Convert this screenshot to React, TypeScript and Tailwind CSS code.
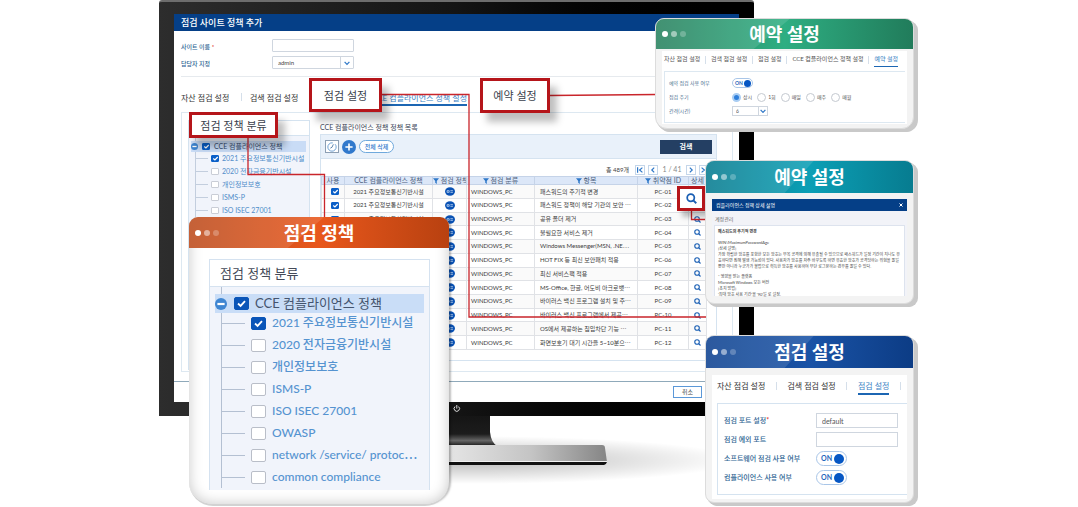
import React from 'react';

const TREE = [
  '2021 주요정보통신기반시설',
  '2020 전자금융기반시설',
  '개인정보보호',
  'ISMS-P',
  'ISO ISEC 27001',
  'OWASP',
  'network /service/ protoc⋯',
  'common compliance',
];

const ITEMS = [
  '패스워드의 주기적 변경',
  '패스워드 정책이 해당 기관의 보안 ⋯',
  '공유 폴더 제거',
  '불필요한 서비스 제거',
  'Windows Messenger(MSN, .NE⋯',
  'HOT FIX 등 최신 보안패치 적용',
  '최신 서비스팩 적용',
  'MS-Office, 한글, 어도비 아크로뱃⋯',
  '바이러스 백신 프로그램 설치 및 주⋯',
  '바이러스 백신 프로그램에서 제공⋯',
  'OS에서 제공하는 침입차단 기능 ⋯',
  '화면보호기 대기 시간을 5~10분으⋯',
];

function Check({ label, checked, big }: { label: string; checked?: boolean; big?: boolean }) {
  return (
    <span className="grid shrink-0 place-items-center">
      <input
        type="checkbox"
        aria-label={label}
        defaultChecked={checked}
        className={
          big
            ? 'peer h-[13px] w-[15px] appearance-none rounded-[2px] border border-[#b9bec8] bg-white [grid-area:1/1] checked:border-[#0a55b8] checked:bg-[#0a55b8]'
            : 'peer h-[7px] w-[8px] appearance-none rounded-[1px] border border-[#c9cdd6] bg-white [grid-area:1/1] checked:border-[#0a5fc8] checked:bg-[#0a5fc8]'
        }
      />
      <svg
        viewBox="0 0 12 12"
        className={
          big
            ? 'pointer-events-none invisible size-[11px] [grid-area:1/1] peer-checked:visible'
            : 'pointer-events-none invisible size-[7px] [grid-area:1/1] peer-checked:visible'
        }
      >
        <path d="M2.2 6 L5 8.6 L9.8 3.4" fill="none" stroke="#fff" strokeWidth="2" />
      </svg>
    </span>
  );
}

function Minus({ className }: { className: string }) {
  return (
    <svg viewBox="0 0 12 12" className={className}>
      <circle cx="6" cy="6" r="6" fill="#3f86d2" />
      <rect x="2.4" y="4.9" width="7.2" height="2.2" fill="#fff" />
    </svg>
  );
}

function SmallTree() {
  return (
    <div className="relative flex flex-col pt-[5px]">
      <div className="absolute top-0 bottom-0 left-[6px] w-px bg-[#c3cede]" />
      <div className="relative ml-[2px] mr-[3px] flex h-[11px] items-center bg-[#c9dcf6]">
        <Minus className="size-[7px]" />
        <span className="ml-[4px] flex items-center gap-[4px]">
          <Check label="CCE 컴플라이언스 정책" checked />
          <span className="text-[7px] text-[#33496b]">CCE 컴플라이언스 정책</span>
        </span>
      </div>
      {TREE.slice(0, 5).map((t, i) => (
        <div key={t} className="ml-[6px] flex h-[13px] items-center">
          <span className="h-px w-[13px] bg-[#c3cede]" />
          <span className="ml-[3px] flex items-center gap-[3px]">
            <Check label={t} checked={i === 0} />
            <span className="text-[7px] text-[#4f8cc9]">{t}</span>
          </span>
        </div>
      ))}
    </div>
  );
}

function BigTree() {
  return (
    <div className="relative flex flex-col pt-[7px]">
      <div className="absolute top-0 bottom-0 left-[11px] w-px bg-[#b4c0d2]" />
      <div className="relative mr-[5px] ml-[5px] flex h-[19px] items-center bg-[#c9ddf7]">
        <Minus className="size-[12px]" />
        <span className="ml-[7px] flex items-center gap-[6px]">
          <Check big label="CCE 컴플라이언스 정책" checked />
          <span className="text-[13px] text-[#44546e]">CCE 컴플라이언스 정책</span>
        </span>
      </div>
      <div className="-mt-px flex flex-col">
        {TREE.map((t, i) => (
          <div key={t} className="ml-[11px] flex h-[22px] items-center">
            <span className="h-px w-[24px] bg-[#b4c0d2]" />
            <span className="ml-[6px] flex items-center gap-[6px]">
              <Check big label={t} checked={i === 0} />
              <span className="text-[12px] font-medium text-[#5593d0]">{t}</span>
            </span>
          </div>
        ))}
      </div>
    </div>
  );
}

function Filter() {
  return (
    <svg viewBox="0 0 10 10" className="inline-block size-[6px] align-middle">
      <path d="M0 0.5 H10 L6.3 5 V10 L3.7 8 V5 Z" fill="#2f78c8" />
    </svg>
  );
}

function Mag({ className }: { className: string }) {
  return (
    <svg viewBox="0 0 12 12" className={className}>
      <circle cx="5.2" cy="5.2" r="3.9" fill="none" stroke="#1a5fb4" strokeWidth="1.9" />
      <path d="M8 8 L11.2 11.2" stroke="#1a5fb4" strokeWidth="2.1" />
    </svg>
  );
}

function Chevron({ d }: { d: string }) {
  return (
    <svg viewBox="0 0 10 10" className="size-[8px]">
      <path d={d} fill="none" stroke="#2f78c8" strokeWidth="1.5" />
    </svg>
  );
}

function Select({ label, value, small }: { label: string; value: string; small?: boolean }) {
  return (
    <div
      className={
        small
          ? 'grid h-[10px] w-[36px] grid-cols-[1fr_9px] border border-[#cfd6df] bg-white'
          : 'grid h-[13px] w-[82px] grid-cols-[1fr_13px] rounded-[1px] border border-[#cfd6df] bg-white'
      }
    >
      <select
        aria-label={label}
        className={
          small
            ? 'col-span-2 col-start-1 row-start-1 appearance-none pl-[3px] text-[5px] text-[#555]'
            : 'col-span-2 col-start-1 row-start-1 appearance-none pl-[5px] text-[6px] text-[#555]'
        }
      >
        <option>{value}</option>
      </select>
      <span className="pointer-events-none col-start-2 row-start-1 flex items-center justify-center border-l border-[#cfd6df]">
        <Chevron d="M2 3.5 L5 6.8 L8 3.5" />
      </span>
    </div>
  );
}

function Toggle({ label, small }: { label: string; small?: boolean }) {
  return (
    <button
      type="button"
      role="switch"
      aria-checked="true"
      aria-label={label}
      className={
        small
          ? 'flex h-[10px] w-[21px] items-center justify-between rounded-full border border-[#a9c6e8] bg-white pr-px pl-[2px] text-[5px] font-bold text-[#1f66bb]'
          : 'flex h-[15px] w-[31px] items-center justify-between rounded-full border border-[#a9c6e8] bg-white pr-[2px] pl-[4px] text-[7px] font-bold text-[#1f66bb]'
      }
    >
      ON
      <span className={small ? 'size-[7px] rounded-full bg-[#0657c4]' : 'size-[10px] rounded-full bg-[#0657c4]'} />
    </button>
  );
}

function Callout({ text, className }: { text: string; className: string }) {
  return (
    <div
      className={`absolute flex items-center justify-center border-[3px] border-[#b5151a] bg-white text-[11px] text-[#3a3f4c] shadow-[7px_9px_7px_rgba(0,0,0,0.25)] ${className}`}
    >
      {text}
    </div>
  );
}

function Card({
  title,
  className,
  head,
  children,
}: {
  title: string;
  className: string;
  head: string;
  children: React.ReactNode;
}) {
  return (
    <section className={`absolute flex flex-col overflow-clip ${className}`}>
      <header className={`relative flex shrink-0 items-center justify-center ${head}`}>
        <svg viewBox="0 0 100 30" preserveAspectRatio="none" className="absolute inset-0 size-full">
          <path d="M0 0 H52 L38 30 H0 Z" fill="#fff" fillOpacity="0.12" />
        </svg>
        <span className="absolute left-[6px] flex gap-[3px]">
          <i className="size-[6px] rounded-full bg-white" />
          <i className="size-[6px] rounded-full bg-white/50" />
          <i className="size-[6px] rounded-full bg-white/25" />
        </span>
        <h2 className="relative text-[18px] font-bold text-white">{title}</h2>
      </header>
      {children}
    </section>
  );
}

const Sep = () => <span className="h-[8px] w-px bg-[#d5dfea]" />;

function Monitor() {
  return (
    <div className="ml-[159px] w-[595px]">
      <div className="rounded-t-[3px] border-t-2 border-[#6d6d6d] bg-linear-to-r from-[#2d2d2d] via-[#141414] to-black px-[15px] pt-[12px] pb-[14px]">
        <div className="flex h-[388px] flex-col bg-white">
          <h1 className="flex h-[17px] shrink-0 items-center bg-[#053f87] pl-[7px] text-[9px] font-medium text-white">
            점검 사이트 정책 추가
          </h1>
          <div className="mx-[7px] flex flex-col gap-[4px] border-b border-[#e6eaee] pt-[8px] pb-[7px] text-[6px] font-medium text-[#2f6593]">
            <div className="flex items-center">
              <label htmlFor="site" className="w-[91px] pt-[2px]">
                사이트 이름 <span className="text-[#d22]">*</span>
              </label>
              <input id="site" className="h-[13px] w-[82px] rounded-[1px] border border-[#cfd6df] bg-white" />
            </div>
            <div className="flex items-center">
              <span className="w-[91px] pt-[2px]">담당자 지정</span>
              <Select label="담당자 지정" value="admin" />
            </div>
          </div>
          <nav className="mt-[16px] ml-[7px] flex h-[13px] items-start text-[8px] text-[#333]">
            <a href="#asset" className="w-[60px] pt-px">자산 점검 설정</a>
            <Sep />
            <a href="#search" className="ml-[8px] w-[68px] pt-px">검색 점검 설정</a>
            <a href="#check" className="w-[51px]" aria-label="점검 설정" />
            <a href="#cce" className="flex h-[13px] w-[98px] justify-end border-b-2 border-[#1c66b3] pt-px text-[#3b82c4]">
              CCE 컴플라이언스 정책 설정
            </a>
            <span className="ml-[10px]"><Sep /></span>
          </nav>
          <div className="mt-[6px] mr-[6px] ml-[7px] flex h-[260px] border border-[#dde8f1] pt-[7px]">
            <aside className="ml-[6px] h-[250px] w-[122px] shrink-0 border border-[#d5e3f0] bg-[#f1f4fb]">
              <div className="h-[15px] border-b border-[#d5e3f0] bg-white" />
              <SmallTree />
            </aside>
            <div className="ml-[10px] w-[397px]">
              <h2 className="flex h-[14px] items-center text-[7px] text-[#3c4658]">CCE 컴플라이언스 정책 정책 목록</h2>
              <div className="h-[227px] border border-[#d5e3f0]">
                <div className="flex h-[24px] items-center border-b border-[#d5e3f0] bg-[#e9f1fa] pr-[4px] pl-[4px]">
                  <button type="button" aria-label="기록" className="flex h-[13px] w-[14px] items-center justify-center border border-[#8d9fb3] bg-white">
                    <svg viewBox="0 0 12 12" className="size-[10px]">
                      <circle cx="6" cy="6" r="5" fill="none" stroke="#5591cd" strokeWidth="1" strokeDasharray="24 3" />
                      <path d="M7.6 2.8 L6 6.3 L4 7.4" fill="none" stroke="#3e6c9c" strokeWidth="1" />
                    </svg>
                  </button>
                  <button type="button" aria-label="추가" className="ml-[3px]">
                    <svg viewBox="0 0 14 14" className="size-[14px]">
                      <circle cx="7" cy="7" r="7" fill="#3179cc" />
                      <path d="M7 3.4 V10.6 M3.4 7 H10.6" stroke="#fff" strokeWidth="1.6" />
                    </svg>
                  </button>
                  <button type="button" className="ml-[3px] h-[13px] w-[35px] rounded-full border border-[#6fa9dc] bg-white text-[6px] font-medium leading-none text-[#3179cc]">
                    전체 삭제
                  </button>
                  <button type="button" className="ml-auto h-[14px] w-[52px] bg-[#243f63] text-[7px] font-bold leading-none text-white">
                    검색
                  </button>
                </div>
                <div className="flex h-[17px] items-center gap-[3px] pt-[4px] pl-[285px] text-[7px] text-[#444]">
                  <span className="w-[26px] whitespace-nowrap text-[6px]">총 489개</span>
                  <button type="button" aria-label="처음" className="flex size-[10px] items-center justify-center border border-[#c4d6ea]">
                    <Chevron d="M2 1.5 V8.5 M8 2 L4.5 5 L8 8" />
                  </button>
                  <button type="button" aria-label="이전" className="flex size-[10px] items-center justify-center border border-[#c4d6ea]">
                    <Chevron d="M6.5 2 L3.5 5 L6.5 8" />
                  </button>
                  <span className="flex w-[22px] justify-center whitespace-nowrap text-[#888]">1 / 41</span>
                  <button type="button" aria-label="다음" className="flex size-[10px] items-center justify-center border border-[#c4d6ea]">
                    <Chevron d="M3.5 2 L6.5 5 L3.5 8" />
                  </button>
                  <button type="button" aria-label="마지막" className="flex size-[10px] items-center justify-center border border-[#c4d6ea]">
                    <Chevron d="M2 2 L5.5 5 L2 8 M8 1.5 V8.5" />
                  </button>
                </div>
                <table className="h-[174px] w-[385px] table-fixed border-collapse text-[6px] leading-none whitespace-nowrap text-[#3a3a3a]">
                  <colgroup>
                    <col className="w-[23px]" />
                    <col className="w-[88px]" />
                    <col className="w-[34px]" />
                    <col className="w-[68px]" />
                    <col className="w-[103px]" />
                    <col className="w-[51px]" />
                    <col className="w-[18px]" />
                  </colgroup>
                  <thead>
                    <tr className="bg-[#dce7f8] text-[#4c5f7d] [&>th]:overflow-hidden [&>th]:border [&>th]:border-[#c5d3e8] [&>th]:p-0 [&>th]:text-[7px] [&>th]:font-normal">
                      <th>사용</th>
                      <th>CCE 컴플라이언스 정책</th>
                      <th><Filter /> 점검 정책</th>
                      <th><Filter /> 점검 분류</th>
                      <th><Filter /> 항목</th>
                      <th><Filter /> 취약점 ID</th>
                      <th>상세</th>
                    </tr>
                  </thead>
                  <tbody>
                    {ITEMS.map((item, i) => (
                      <tr key={item} className="odd:bg-[#fafafa] [&>td]:border [&>td]:border-[#e0e2e6] [&>td]:p-0">
                        <td>
                          <span className="flex justify-center pl-[4px]">
                            <Check label={`${item} 사용`} checked />
                          </span>
                        </td>
                        <td className="text-center">2021 주요정보통신기반시설</td>
                        <td>
                          <svg viewBox="0 0 12 10" className="mx-auto h-[9px] w-[10px]">
                            <ellipse cx="6" cy="5" rx="6" ry="5" fill="#0a52b4" />
                            <path d="M2.5 4 H5 V6 H2.5 Z M6.5 4 H9.5 M6.5 6 H9.5" fill="none" stroke="#cfe0f5" strokeWidth="0.9" />
                          </svg>
                        </td>
                        <td><span className="pl-[4px]">WINDOWS_PC</span></td>
                        <td><span className="pl-[5px]">{item}</span></td>
                        <td className="text-center">PC-{String(i + 1).padStart(2, '0')}</td>
                        <td><Mag className="mx-auto size-[7px]" /></td>
                      </tr>
                    ))}
                  </tbody>
                </table>
              </div>
            </div>
          </div>
          <div className="mt-[9px] flex flex-1 items-center justify-end border-t border-[#8fa9ba] pr-[37px]">
            <button type="button" className="h-[12px] w-[29px] border border-[#5b98d8] bg-white text-[6px] leading-none text-[#444]">
              취소
            </button>
          </div>
        </div>
      </div>
      <svg viewBox="0 0 595 91" className="block w-full">
        <defs>
          <linearGradient id="neck" x1="0" y1="0" x2="0" y2="1">
            <stop offset="0" stopColor="#151515" />
            <stop offset="0.6" stopColor="#1c1c1c" />
            <stop offset="0.82" stopColor="#666" />
            <stop offset="1" stopColor="#181818" />
          </linearGradient>
          <linearGradient id="base" x1="0" y1="0" x2="1" y2="0">
            <stop offset="0" stopColor="#aaa" />
            <stop offset="0.5" stopColor="#e2e2e2" />
            <stop offset="0.75" stopColor="#c4c4c4" />
            <stop offset="1" stopColor="#858585" />
          </linearGradient>
          <radialGradient id="floor">
            <stop offset="0" stopColor="#000" stopOpacity="0.28" />
            <stop offset="1" stopColor="#000" stopOpacity="0" />
          </radialGradient>
        </defs>
        <ellipse cx="310" cy="44" rx="270" ry="24" fill="url(#floor)" />
        <path d="M266 0 H331 V16 Q332 26 338 30 H258 Q266 26 266 16 Z" fill="url(#neck)" />
        <path d="M150 29 H443 Q446 29 446 32 L448 46 H146 Z" fill="url(#base)" />
        <path d="M146 45.5 H448" stroke="#f2f2f2" strokeWidth="1" />
        <path d="M146 46 H448 Q447 49 445 49 H149 Z" fill="#111" />
      </svg>
    </div>
  );
}

export default function App() {
  return (
    <main className="overflow-x-auto bg-white font-['Lato','Noto_Sans_CJK_KR',sans-serif]">
      <div className="relative mx-auto min-h-[507px] w-full max-w-[1078px] overflow-hidden leading-none">
        <Monitor />

        <svg width="1078" height="507" viewBox="0 0 1078 507" className="absolute top-0 left-0">
          <g fill="none" stroke="#c9252b" strokeWidth="1.3">
            <path d="M382 94.5 H469 V317 H706" />
            <path d="M549 95.5 L657 94.5" />
            <path d="M248 137 V174.5 H324.5 V217" />
            <path d="M691.5 211 V219.5 H708" />
          </g>
          <path d="M455 406.6 A2.7 2.7 0 1 0 458.6 406.6 M456.8 405 V408.6" fill="none" stroke="#ddd" strokeWidth="1" />
        </svg>

        <Callout text="점검 설정" className="top-[78px] left-[309px] h-[34px] w-[73px]" />
        <Callout text="예약 설정" className="top-[78px] left-[480px] h-[35px] w-[70px]" />
        <Callout text="점검 정책 분류" className="top-[112px] left-[189px] h-[26px] w-[89px]" />
        <div className="absolute top-[186px] left-[677px] flex h-[25px] w-[28px] items-center justify-center border-[3px] border-[#b5151a] bg-white shadow-[5px_6px_5px_rgba(0,0,0,0.25)]">
          <Mag className="size-[11px]" />
        </div>

        <Card
          title="점검 정책"
          className="top-[217px] left-[189px] h-[289px] w-[260px] rounded-t-[9px] rounded-b-[24px] border-b-2 border-[#d2d2d2] bg-white shadow-[4px_0_2px_-2px_rgba(0,0,0,0.25),inset_0_0_14px_rgba(0,0,0,0.22)]"
          head="h-[31px] bg-linear-to-r from-[#bd4c1d] via-[#e8571c] to-[#b84110]"
        >
          <div className="mt-[11px] mr-[19px] ml-[20px] flex h-[231px] flex-col border border-b-0 border-[#d5e2f0] bg-[#f1f4fb]">
            <h3 className="flex h-[27px] items-center border-b border-[#d5e2f0] bg-white pl-[10px] text-[13px] text-[#444a58]">
              점검 정책 분류
            </h3>
            <BigTree />
          </div>
        </Card>

        <Card
          title="예약 설정"
          className="top-[18px] left-[655px] h-[111px] w-[259px] rounded-t-[9px] rounded-b-[12px] border border-[#dcdcdc] bg-[#f3f3f3] shadow-[1px_1px_0_#c9c9c9,2px_2px_0_#c9c9c9,3px_3px_0_#c9c9c9,4px_3px_0_#c9c9c9]"
          head="h-[30px] bg-linear-to-r from-[#28825f] via-[#2eae82] to-[#217c5b]"
        >
          <div className="mx-[6px] mt-[2px] flex h-[73px] flex-col bg-white px-[2px] pt-[5px]">
            <nav className="flex h-[12px] items-start justify-between pr-[7px] text-[6px] text-[#555]">
              <a href="#c1">자산 점검 설정</a>
              <Sep />
              <a href="#c2">검색 점검 설정</a>
              <Sep />
              <a href="#c3">점검 설정</a>
              <Sep />
              <a href="#c4">CCE 컴플라이언스 정책 설정</a>
              <Sep />
              <a href="#c5" className="h-[11px] border-b border-[#1c66b3] text-[#3b82c4]">예약 설정</a>
            </nav>
            <div className="mt-[3px] flex h-[52px] flex-col justify-center gap-[3px] border border-r-0 border-[#dde8f1] pl-[4px] text-[5px] text-[#4d7090]">
              <div className="flex h-[11px] items-center">
                <span className="w-[63px]">예약 점검 사용 여부</span>
                <Toggle small label="예약 점검 사용 여부" />
              </div>
              <div className="flex h-[11px] items-center">
                <span className="w-[63px]">점검 주기</span>
                <span className="flex gap-[5px] text-[#555]">
                  {['상시', '1회', '매일', '매주', '매월'].map((t, i) => (
                    <label key={t} className="flex items-center gap-[2px] whitespace-nowrap">
                      <input
                        type="radio"
                        name="cycle"
                        defaultChecked={i === 0}
                        className="size-[9px] appearance-none rounded-full border border-[#c4c9d0] bg-white checked:border-2 checked:border-[#a9cdf3] checked:bg-[#2f7fdb]"
                      />
                      {t}
                    </label>
                  ))}
                </span>
              </div>
              <div className="flex h-[11px] items-center">
                <span className="w-[63px]">간격(시간)</span>
                <Select small label="간격(시간)" value="6" />
              </div>
            </div>
          </div>
        </Card>

        <Card
          title="예약 설정"
          className="top-[160px] left-[705px] h-[144px] w-[209px] rounded-[9px] border border-[#dcdcdc] bg-[#f3f3f3] shadow-[1px_1px_0_#c9c9c9,2px_2px_0_#c9c9c9,3px_3px_0_#c9c9c9,4px_3px_0_#c9c9c9]"
          head="h-[32px] bg-linear-to-r from-[#077c90] via-[#0c9fb5] to-[#077c90]"
        >
          <div className="mx-[6px] mt-[6px] flex flex-col bg-[#f2f3f8]">
            <h3 className="flex h-[12px] items-center justify-between bg-[#053f87] px-[4px] text-[5px] text-white">
              컴플라이언스 정책 상세 설명
              <svg viewBox="0 0 8 8" className="size-[4px]">
                <path d="M1 1 L7 7 M7 1 L1 7" stroke="#fff" strokeWidth="2" />
              </svg>
            </h3>
            <p className="mt-[6px] mb-[3px] ml-[3px] text-[5px] text-[#666]">계정관리</p>
            <div className="mr-[2px] ml-[2px] h-[71px] border border-b-0 border-[#dde3ee] bg-white pt-[3px] pr-px pl-[3px] text-[4px] leading-[6px] text-[#444]">
              <p className="mb-[5px] font-bold">패스워드의 주기적 변경</p>
              <p>WIN\MaximumPasswordAge</p>
              <p>[상세 설명]</p>
              <p className="mb-[4px] break-all">
                가장 확립한 암호를 포함한 모든 암호는 무복 공격에 의해 유출될 수 있으므로 패스워드가 일정 기간이 지나도 유효하다면 침해 발생 가능성이 있다.
                사용자가 암호를 자주 바꾸도록 하면 유효한 암호가 공격당하는 위험을 줄일 뿐만 아니라 누군가가 불법으로 획득한 암호를 사용하여 무단
                로그온하는 경우를 줄일 수 있다.
              </p>
              <p>* 영향을 받는 플랫폼</p>
              <p>Microsoft Windows 모든 버전</p>
              <p>[조치 방법]</p>
              <p>'최대 암호 사용 기간'을 '90'일 로 설정.</p>
            </div>
          </div>
        </Card>

        <Card
          title="점검 설정"
          className="top-[335px] left-[705px] h-[168px] w-[209px] rounded-[9px] border border-[#dcdcdc] bg-[#f3f3f3] shadow-[1px_1px_0_#c9c9c9,2px_2px_0_#c9c9c9,3px_3px_0_#c9c9c9,4px_3px_0_#c9c9c9]"
          head="h-[32px] bg-linear-to-r from-[#0f4391] via-[#1a53a6] to-[#0c3c85]"
        >
          <div className="mx-[6px] mt-[7px] flex h-[124px] flex-col bg-white pt-[7px] pl-[5px]">
            <nav className="flex h-[15px] items-start justify-between pr-[6px] text-[8px] text-[#333]">
              <a href="#d1">자산 점검 설정</a>
              <Sep />
              <a href="#d2">검색 점검 설정</a>
              <Sep />
              <a href="#d3" className="h-[13px] border-b-2 border-[#1c66b3] text-[#3b82c4]">점검 설정</a>
              <Sep />
            </nav>
            <div className="mt-[6px] flex h-[92px] flex-col justify-center gap-[4px] border border-r-0 border-[#d5e3f0] pl-[6px] text-[7px] font-medium text-[#2f6593]">
              <div className="flex h-[15px] items-center">
                <label htmlFor="port" className="w-[92px]">
                  점검 포트 설정<span className="text-[#d22]">*</span>
                </label>
                <input id="port" defaultValue="default" className="h-[15px] w-[82px] border border-[#cfd6df] bg-white pl-[5px] text-[7px] font-normal text-[#555]" />
              </div>
              <div className="flex h-[15px] items-center">
                <label htmlFor="except" className="w-[92px]">점검 예외 포트</label>
                <input id="except" className="h-[15px] w-[82px] border border-[#cfd6df] bg-white" />
              </div>
              <div className="flex h-[15px] items-center">
                <span className="w-[92px]">소프트웨어 점검 사용 여부</span>
                <Toggle label="소프트웨어 점검 사용 여부" />
              </div>
              <div className="flex h-[15px] items-center">
                <span className="w-[92px]">컴플라이언스 사용 여부</span>
                <Toggle label="컴플라이언스 사용 여부" />
              </div>
            </div>
          </div>
        </Card>
      </div>
    </main>
  );
}
